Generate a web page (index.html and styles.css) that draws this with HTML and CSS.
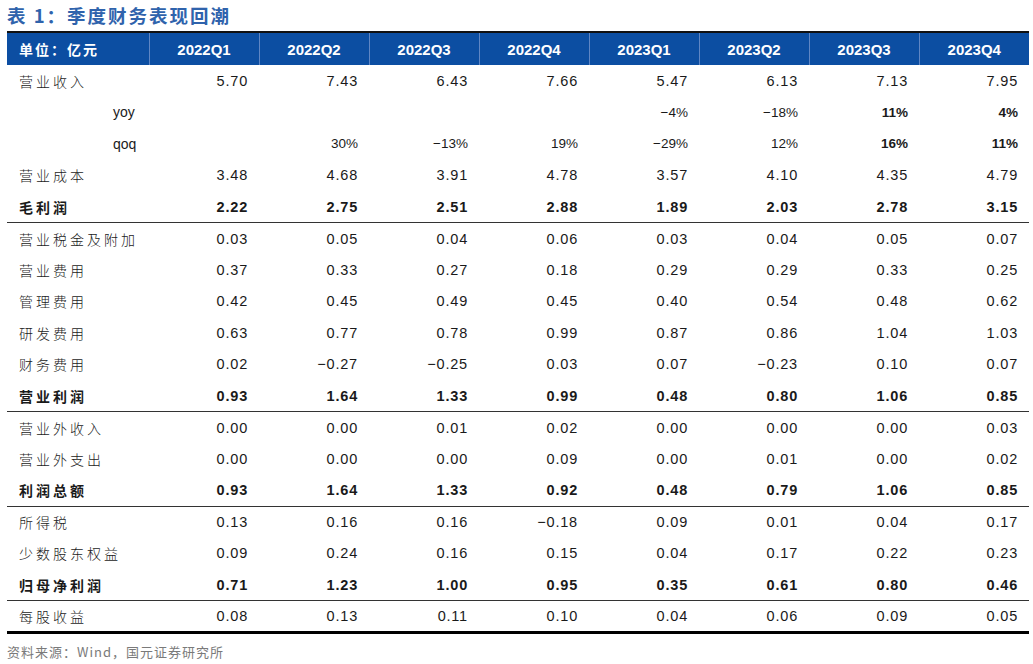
FILE: index.html
```html
<!DOCTYPE html>
<html lang="zh-CN">
<head>
    <meta charset="UTF-8">
    <title>季度财务表现回潮</title>
    <link rel="stylesheet" href="styles.css">
</head>
<body>
    <div class="report">
        <h1 class="report-title">表 1：季度财务表现回潮</h1>
        <table class="fin-table">
            <thead>
                <tr>
                    <th class="label">单位：亿元</th>
                    <th>2022Q1</th><th>2022Q2</th><th>2022Q3</th><th>2022Q4</th>
                    <th>2023Q1</th><th>2023Q2</th><th>2023Q3</th><th>2023Q4</th>
                </tr>
            </thead>
            <tbody>
                <tr>
                    <td class="label">营业收入</td>
                    <td>5.70</td><td>7.43</td><td>6.43</td><td>7.66</td><td>5.47</td><td>6.13</td><td>7.13</td><td>7.95</td>
                </tr>
                <tr class="ratio">
                    <td class="label sub">yoy</td>
                    <td></td><td></td><td></td><td></td><td>−4%</td><td>−18%</td><td class="strong">11%</td><td class="strong">4%</td>
                </tr>
                <tr class="ratio">
                    <td class="label sub">qoq</td>
                    <td></td><td>30%</td><td>−13%</td><td>19%</td><td>−29%</td><td>12%</td><td class="strong">16%</td><td class="strong">11%</td>
                </tr>
                <tr>
                    <td class="label">营业成本</td>
                    <td>3.48</td><td>4.68</td><td>3.91</td><td>4.78</td><td>3.57</td><td>4.10</td><td>4.35</td><td>4.79</td>
                </tr>
                <tr class="total">
                    <td class="label">毛利润</td>
                    <td>2.22</td><td>2.75</td><td>2.51</td><td>2.88</td><td>1.89</td><td>2.03</td><td>2.78</td><td>3.15</td>
                </tr>
                <tr>
                    <td class="label">营业税金及附加</td>
                    <td>0.03</td><td>0.05</td><td>0.04</td><td>0.06</td><td>0.03</td><td>0.04</td><td>0.05</td><td>0.07</td>
                </tr>
                <tr>
                    <td class="label">营业费用</td>
                    <td>0.37</td><td>0.33</td><td>0.27</td><td>0.18</td><td>0.29</td><td>0.29</td><td>0.33</td><td>0.25</td>
                </tr>
                <tr>
                    <td class="label">管理费用</td>
                    <td>0.42</td><td>0.45</td><td>0.49</td><td>0.45</td><td>0.40</td><td>0.54</td><td>0.48</td><td>0.62</td>
                </tr>
                <tr>
                    <td class="label">研发费用</td>
                    <td>0.63</td><td>0.77</td><td>0.78</td><td>0.99</td><td>0.87</td><td>0.86</td><td>1.04</td><td>1.03</td>
                </tr>
                <tr>
                    <td class="label">财务费用</td>
                    <td>0.02</td><td>−0.27</td><td>−0.25</td><td>0.03</td><td>0.07</td><td>−0.23</td><td>0.10</td><td>0.07</td>
                </tr>
                <tr class="total">
                    <td class="label">营业利润</td>
                    <td>0.93</td><td>1.64</td><td>1.33</td><td>0.99</td><td>0.48</td><td>0.80</td><td>1.06</td><td>0.85</td>
                </tr>
                <tr>
                    <td class="label">营业外收入</td>
                    <td>0.00</td><td>0.00</td><td>0.01</td><td>0.02</td><td>0.00</td><td>0.00</td><td>0.00</td><td>0.03</td>
                </tr>
                <tr>
                    <td class="label">营业外支出</td>
                    <td>0.00</td><td>0.00</td><td>0.00</td><td>0.09</td><td>0.00</td><td>0.01</td><td>0.00</td><td>0.02</td>
                </tr>
                <tr class="total">
                    <td class="label">利润总额</td>
                    <td>0.93</td><td>1.64</td><td>1.33</td><td>0.92</td><td>0.48</td><td>0.79</td><td>1.06</td><td>0.85</td>
                </tr>
                <tr>
                    <td class="label">所得税</td>
                    <td>0.13</td><td>0.16</td><td>0.16</td><td>−0.18</td><td>0.09</td><td>0.01</td><td>0.04</td><td>0.17</td>
                </tr>
                <tr>
                    <td class="label">少数股东权益</td>
                    <td>0.09</td><td>0.24</td><td>0.16</td><td>0.15</td><td>0.04</td><td>0.17</td><td>0.22</td><td>0.23</td>
                </tr>
                <tr class="total">
                    <td class="label">归母净利润</td>
                    <td>0.71</td><td>1.23</td><td>1.00</td><td>0.95</td><td>0.35</td><td>0.61</td><td>0.80</td><td>0.46</td>
                </tr>
                <tr class="last">
                    <td class="label">每股收益</td>
                    <td>0.08</td><td>0.13</td><td>0.11</td><td>0.10</td><td>0.04</td><td>0.06</td><td>0.09</td><td>0.05</td>
                </tr>
            </tbody>
        </table>
        <p class="source">资料来源：Wind，国元证券研究所</p>
    </div>
</body>
</html>
```

FILE: styles.css
```css
* {
    margin: 0;
    padding: 0;
    box-sizing: border-box;
}

body {
    background-color: #ffffff;
    font-family: 'Liberation Sans', 'Noto Sans CJK SC', sans-serif;
    color: #1a1a1a;
}

.report {
    padding: 4px 5px 0 7px;
}

.report-title {
    font-family: 'Noto Sans CJK SC', sans-serif;
    font-size: 18.5px;
    font-weight: 700;
    color: #2f63ac;
    letter-spacing: 2px;
    line-height: 22px;
    height: 27px;
}

.fin-table {
    width: 1020px;
    border-collapse: collapse;
    table-layout: fixed;
    border-top: 2px solid #111111;
    border-bottom: 3px solid #000000;
}

.fin-table th {
    background-color: #0c4ea2;
    color: #ffffff;
    font-size: 15px;
    font-weight: 700;
    height: 33px;
    width: 110px;
    text-align: center;
    border-left: 1px solid #5f86c4;
    border-top: 1px solid #5f86c4;
}

.fin-table th.label {
    width: 142px;
    text-align: left;
    padding-left: 12px;
    border-left: none;
    font-family: 'Noto Sans CJK SC', sans-serif;
    font-size: 14px;
    letter-spacing: 2px;
}

.fin-table td {
    height: 31.5px;
    text-align: right;
    padding-right: 11px;
    font-size: 14.5px;
    letter-spacing: 0.8px;
    color: #1a1a1a;
}

.fin-table td.label {
    text-align: left;
    padding-left: 12px;
    font-family: 'Noto Sans CJK SC', sans-serif;
    font-size: 14px;
    font-weight: 300;
    letter-spacing: 3px;
}

.fin-table td.sub {
    padding-left: 106px;
    font-family: 'Liberation Sans', sans-serif;
    font-weight: 400;
    letter-spacing: 0;
}

.ratio td {
    font-size: 13.5px;
    letter-spacing: 0;
}

.ratio td.strong {
    font-weight: 700;
}

.total td,
.total td.label {
    font-weight: 700;
    border-bottom: 1px solid #333333;
}

.source {
    margin-top: 8px;
    font-family: 'Noto Sans CJK SC', sans-serif;
    font-size: 13px;
    color: #7a7a7a;
    letter-spacing: 1px;
}
```
